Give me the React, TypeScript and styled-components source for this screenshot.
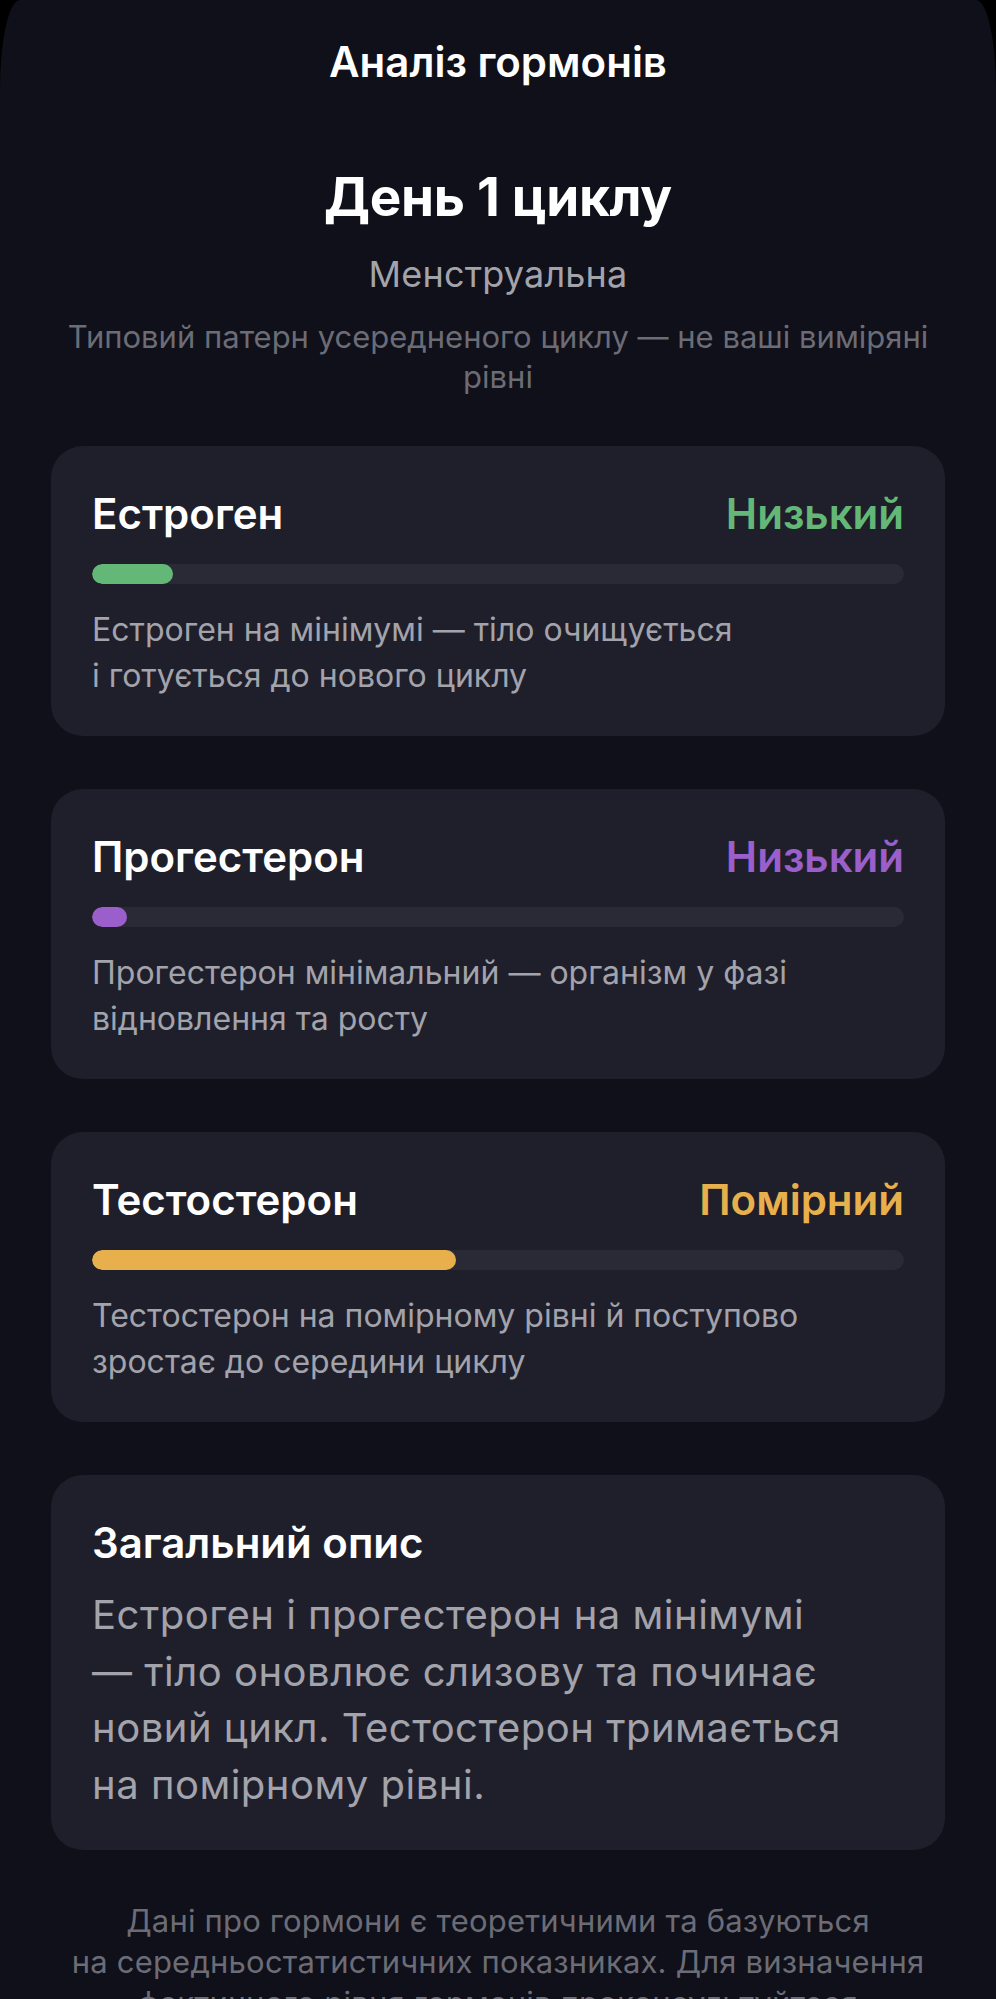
import styled, { createGlobalStyle } from 'styled-components';

const GlobalStyle = createGlobalStyle`
  html, body {
    margin: 0;
    padding: 0;
    background: #000;
  }
  body {
    font-family: Inter, "Noto Sans", "Liberation Sans", sans-serif;
    -webkit-font-smoothing: antialiased;
  }
`;

const Screen = styled.div`
  min-height: 1999px;
  background: #0f1019;
  border-radius: 20px 20px 0 0 / 90px 90px 0 0;
  padding: 41px 51px 40px;
  box-sizing: border-box;
  display: flex;
  flex-direction: column;
  align-items: center;
`;

const TopTitle = styled.div`
  color: #fff;
  font-size: 42px;
  font-weight: 600;
  line-height: 42px;
`;

const DayTitle = styled.h1`
  margin: 84px 0 0;
  color: #fff;
  font-size: 53px;
  font-weight: 700;
  line-height: 60px;
  letter-spacing: -0.3px;
`;

const Phase = styled.div`
  margin-top: 27px;
  color: #a3a3ab;
  font-size: 36px;
  line-height: 40px;
  letter-spacing: 0.2px;
`;

const Note = styled.p`
  margin: 23px 0 0;
  color: #6c6c76;
  font-size: 31px;
  line-height: 40px;
  text-align: center;
`;

const Cards = styled.div`
  margin-top: 49px;
  width: 100%;
  display: flex;
  flex-direction: column;
  gap: 53px;
`;

const Card = styled.section`
  background: #1f1f2b;
  border-radius: 32px;
  padding: 45px 41px 37px;
`;

const CardHead = styled.div`
  display: flex;
  justify-content: space-between;
  align-items: center;
  font-size: 42px;
  font-weight: 600;
  line-height: 46px;
`;

const Name = styled.span`
  color: #fff;
`;

const Level = styled.span<{ $color: string }>`
  color: ${(p) => p.$color};
`;

const Track = styled.div`
  margin-top: 27px;
  height: 20px;
  border-radius: 10px;
  background: #2a2a36;
  overflow: hidden;
`;

const Fill = styled.div<{ $color: string }>`
  height: 100%;
  border-radius: 10px;
  background: ${(p) => p.$color};
`;

const Desc = styled.p`
  margin: 23px 0 0;
  color: #a3a3ab;
  font-size: 32px;
  line-height: 46px;
`;

const SummaryTitle = styled.div`
  color: #fff;
  font-size: 42px;
  font-weight: 600;
  line-height: 46px;
`;

const SummaryText = styled.p`
  margin: 21px 0 0;
  color: #a3a3ab;
  font-size: 40px;
  line-height: 56.5px;
  letter-spacing: 0.5px;
`;

const Footer = styled.p`
  margin: 50px 0 0;
  color: #6c6c76;
  font-size: 31px;
  line-height: 41px;
  text-align: center;
  letter-spacing: 0.2px;
`;

const hormones = [
  {
    name: 'Естроген',
    level: 'Низький',
    color: '#63b878',
    value: 10,
    text: 'Естроген на мінімумі — тіло очищується і\u00a0готується\u00a0до нового циклу',
  },
  {
    name: 'Прогестерон',
    level: 'Низький',
    color: '#9b5fcb',
    value: 4.3,
    text: 'Прогестерон мінімальний — організм у\u00a0фазі відновлення та росту',
  },
  {
    name: 'Тестостерон',
    level: 'Помірний',
    color: '#e8b04d',
    value: 44.8,
    text: 'Тестостерон на помірному рівні й\u00a0поступово зростає\u00a0до середини циклу',
  },
];

const App = () => {
  return (
    <>
      <GlobalStyle />
      <Screen>
        <TopTitle>Аналіз гормонів</TopTitle>
        <DayTitle>День 1 циклу</DayTitle>
        <Phase>Менструальна</Phase>
        <Note>Типовий патерн усередненого циклу — не ваші виміряні рівні</Note>

        <Cards>
          {hormones.map((h) => (
            <Card key={h.name}>
              <CardHead>
                <Name>{h.name}</Name>
                <Level $color={h.color}>{h.level}</Level>
              </CardHead>
              <Track>
                <Fill $color={h.color} style={{ width: `${h.value}%` }} />
              </Track>
              <Desc>{h.text}</Desc>
            </Card>
          ))}
          <Card>
            <SummaryTitle>Загальний опис</SummaryTitle>
            <SummaryText>
              Естроген і прогестерон на мінімумі —{'\u00a0'}тіло оновлює слизову та починає
              новий цикл. Тестостерон тримається на{'\u00a0'}помірному рівні.
            </SummaryText>
          </Card>
        </Cards>

        <Footer>
          Дані про гормони є теоретичними та базуються на{'\u00a0'}середньостатистичних
          показниках. Для визначення фактичного рівня гормонів проконсультуйтеся
          <br />з{'\u00a0'}лікарем.
        </Footer>
      </Screen>
    </>
  );
};

export default App;
